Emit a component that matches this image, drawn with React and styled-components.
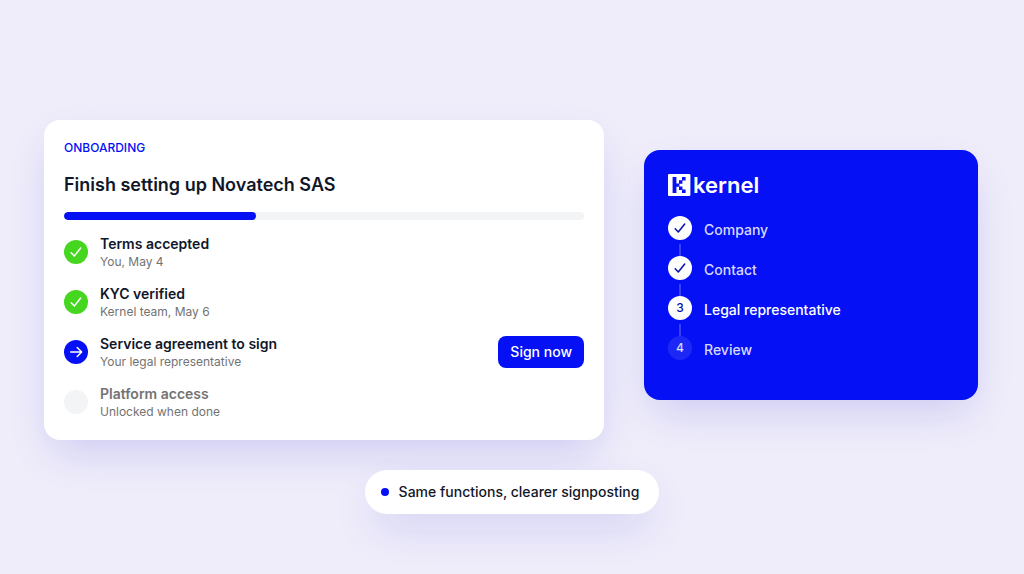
import styled, { createGlobalStyle } from 'styled-components';

const GlobalStyle = createGlobalStyle`
    * {
        box-sizing: border-box;
    }

    body {
        margin: 0;
        background-color: #efedfa;
        color: #111729;
        font-family: Inter, sans-serif;
        font-size: 14px;
        line-height: 20px;
    }
`;

const Page = styled.main`
    min-height: 100vh;
    display: flex;
    flex-direction: column;
    align-items: center;
    gap: 30px;
    padding: 120px 0 60px;
`;

const Panels = styled.div`
    width: 100%;
    display: grid;
    grid-template-columns: 560fr 334fr;
    align-items: start;
    gap: 40px;
    padding: 0 46px 0 44px;
`;

const Card = styled.section`
    background-color: #fff;
    border-radius: 16px;
    padding: 20px 20px 18px;
    box-shadow: 0 18px 44px -8px rgba(20, 20, 200, 0.16);
`;

const Eyebrow = styled.p`
    margin: 0;
    color: #0510f5;
    font-size: 12px;
    line-height: 16px;
    font-weight: 500;
    text-transform: uppercase;
`;

const Title = styled.h1`
    margin: 16px 0 0;
    font-size: 18px;
    line-height: 26px;
    font-weight: 600;
`;

const Progress = styled.div`
    height: 8px;
    margin: 14px 0 12px;
    border-radius: 4px;
    background-color: #f3f4f6;
    overflow: hidden;
`;

const ProgressBar = styled.div`
    height: 100%;
    border-radius: 4px;
    background-color: #0510f5;
`;

const TaskList = styled.ul`
    display: flex;
    flex-direction: column;
    gap: 10px;
    margin: 0;
    padding: 0;
    list-style: none;
`;

const Task = styled.li`
    height: 40px;
    display: flex;
    align-items: center;
    gap: 12px;
`;

const taskColors = {
    done: '#45d61f',
    current: '#0510f5',
    locked: '#f3f4f6',
};

const TaskIcon = styled.span`
    width: 24px;
    height: 24px;
    flex: none;
    border-radius: 50%;
    background-color: ${({ $status }) => taskColors[$status]};
    color: #fff;
`;

const TaskText = styled.div`
    flex: 1;
`;

const TaskTitle = styled.h2`
    margin: 0;
    color: ${({ $muted }) => ($muted ? '#737373' : '#111729')};
    font-size: 14px;
    line-height: 20px;
    font-weight: 600;
`;

const TaskMeta = styled.p`
    margin: 0;
    color: #737373;
    font-size: 12px;
    line-height: 16px;
`;

const SignButton = styled.button`
    height: 32px;
    padding: 0 12px;
    border: none;
    border-radius: 8px;
    background-color: #0510f5;
    color: #fff;
    font: 500 14px/20px Inter, sans-serif;
    cursor: pointer;
`;

const StepsCard = styled.aside`
    min-height: 250px;
    margin-top: 30px;
    padding: 24px;
    border-radius: 16px;
    background-color: #0510f5;
    color: #fff;
    box-shadow: 0 18px 44px -8px rgba(20, 20, 200, 0.16);
`;

const Brand = styled.div`
    display: flex;
    align-items: center;
    gap: 2px;
    font-size: 22px;
    line-height: 22px;
    font-weight: 600;
`;

const StepList = styled.ol`
    margin: 20px 0 0;
    padding: 0;
    list-style: none;
`;

const Step = styled.li`
    height: 40px;
    display: flex;
    gap: 12px;
    color: ${({ $active }) => ($active ? '#fff' : 'rgba(255, 255, 255, 0.85)')};
    font-weight: 500;
`;

const StepTrack = styled.div`
    display: flex;
    flex-direction: column;
    align-items: center;
    gap: 4px;
`;

const StepBadge = styled.span`
    width: 24px;
    height: 24px;
    flex: none;
    border-radius: 50%;
    background-color: ${({ $upcoming }) => ($upcoming ? 'rgba(255, 255, 255, 0.1)' : '#fff')};
    color: ${({ $upcoming }) => ($upcoming ? 'rgba(255, 255, 255, 0.85)' : '#0510b0')};
    font-size: 12px;
    line-height: 24px;
    text-align: center;
`;

const StepLine = styled.span`
    width: 2px;
    flex: 1;
    background-color: rgba(255, 255, 255, 0.2);
`;

const StepLabel = styled.span`
    padding-top: 4px;
`;

const Note = styled.p`
    display: flex;
    align-items: center;
    gap: 10px;
    margin: 0;
    padding: 12px 20px 12px 16px;
    border-radius: 22px;
    background-color: #fff;
    font-weight: 500;
    box-shadow: 0 18px 44px -8px rgba(20, 20, 200, 0.16);
`;

const Dot = styled.span`
    width: 8px;
    height: 8px;
    border-radius: 50%;
    background-color: #0510f5;
`;

const Glyph = styled.svg`
    display: block;
    fill: none;
    stroke: currentColor;
    stroke-width: 1.5;
    stroke-linecap: round;
    stroke-linejoin: round;
`;

function CheckIcon() {
    return (
        <Glyph width="24" height="24" viewBox="0 0 24 24" aria-hidden="true">
            <path d="M7.2 12.8 10.3 16 16.7 8" />
        </Glyph>
    );
}

function ArrowIcon() {
    return (
        <Glyph width="24" height="24" viewBox="0 0 24 24" aria-hidden="true">
            <path d="M6.7 12h11M13.2 7.5l4.5 4.5-4.5 4.5" />
        </Glyph>
    );
}

function KernelMark() {
    return (
        <svg width="23" height="22" viewBox="0 0 23 22" aria-hidden="true">
            <rect width="22.4" height="22" rx="1" fill="#fff" />
            <path
                fill="#0510f5"
                d="M4.6 3.1h3.8v16H4.6zM14 3.1h3.6v3.5H14zM11 6.3h3.4v3.4H11zM8 9.4h3.4v3.4H8zM11 12.5h3.4v3.4H11zM14 15.6h3.6v3.5H14z"
            />
        </svg>
    );
}

const tasks = [
    { title: 'Terms accepted', meta: 'You, May 4', status: 'done' },
    { title: 'KYC verified', meta: 'Kernel team, May 6', status: 'done' },
    { title: 'Service agreement to sign', meta: 'Your legal representative', status: 'current' },
    { title: 'Platform access', meta: 'Unlocked when done', status: 'locked' },
];

const steps = ['Company', 'Contact', 'Legal representative', 'Review'];
const currentStep = 2;
const progress = 37;

export default function App() {
    return (
        <>
            <GlobalStyle />
            <Page>
                <Panels>
                    <Card>
                        <Eyebrow>Onboarding</Eyebrow>
                        <Title>Finish setting up Novatech SAS</Title>
                        <Progress role="progressbar" aria-label="Onboarding" aria-valuenow={progress}>
                            <ProgressBar style={{ width: `${progress}%` }} />
                        </Progress>
                        <TaskList>
                            {tasks.map(({ title, meta, status }) => (
                                <Task key={title}>
                                    <TaskIcon $status={status}>
                                        {status === 'done' && <CheckIcon />}
                                        {status === 'current' && <ArrowIcon />}
                                    </TaskIcon>
                                    <TaskText>
                                        <TaskTitle $muted={status === 'locked'}>{title}</TaskTitle>
                                        <TaskMeta>{meta}</TaskMeta>
                                    </TaskText>
                                    {status === 'current' && <SignButton type="button">Sign now</SignButton>}
                                </Task>
                            ))}
                        </TaskList>
                    </Card>
                    <StepsCard>
                        <Brand>
                            <KernelMark />
                            kernel
                        </Brand>
                        <StepList>
                            {steps.map((label, index) => (
                                <Step key={label} $active={index === currentStep}>
                                    <StepTrack>
                                        <StepBadge $upcoming={index > currentStep}>
                                            {index < currentStep ? <CheckIcon /> : index + 1}
                                        </StepBadge>
                                        {index < steps.length - 1 && <StepLine />}
                                    </StepTrack>
                                    <StepLabel>{label}</StepLabel>
                                </Step>
                            ))}
                        </StepList>
                    </StepsCard>
                </Panels>
                <Note>
                    <Dot />
                    Same functions, clearer signposting
                </Note>
            </Page>
        </>
    );
}
